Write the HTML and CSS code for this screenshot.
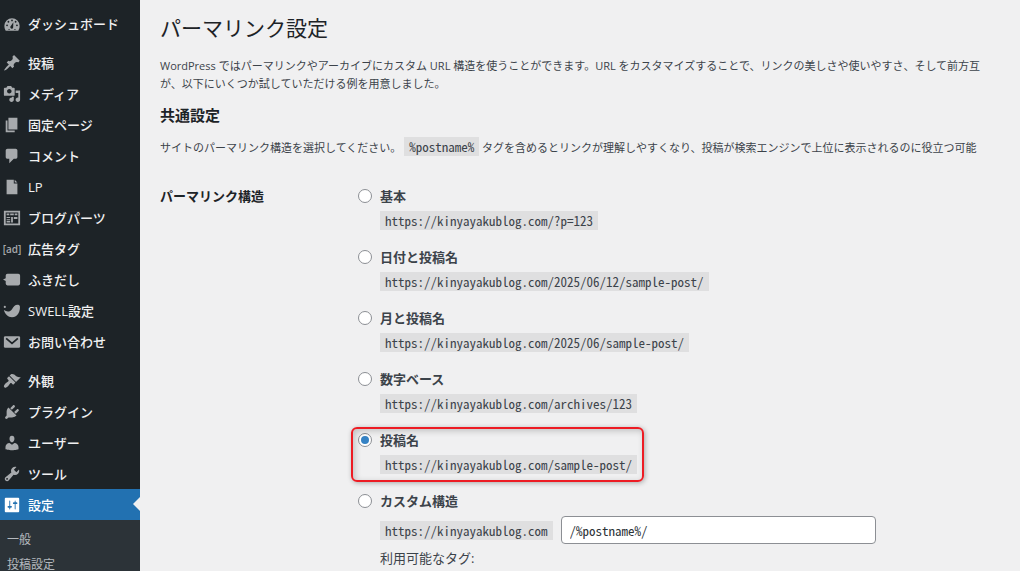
FILE: index.html
```html
<!DOCTYPE html>
<html lang="ja">
<head>
    <meta charset="UTF-8">
    <meta name="viewport" content="width=device-width, initial-scale=1.0">
    <title>パーマリンク設定</title>
    <link rel="stylesheet" href="styles.css">
</head>
<body>
    <nav class="sidebar">
        <ul class="menu">
            <li><a href="#"><svg class="icon" viewBox="0 0 20 20"><path d="M3 17.500h14A8.500 8.500 0 0 0 18.500 12a8.500 8.500 0 0 0-17 0c0 2 .6 4 1.500 5.500z"/><g class="cut"><circle cx="10" cy="6" r="1"/><circle cx="6" cy="7.500" r="1"/><circle cx="14" cy="7.500" r="1"/><circle cx="4.500" cy="11.500" r="1"/><circle cx="15.500" cy="11.500" r="1"/><path d="M11.500 8l-.2 5.500a1.600 1.600 0 1 1-2.600-1.200zM6 15.500h1.500v1H6zM12.500 15.500H14v1h-1.500z"/></g></svg>ダッシュボード</a></li>
            <li class="separated"><a href="#"><svg class="icon" viewBox="0 0 20 20"><path d="M10.440 3.020l1.820-1.820 6.360 6.350-1.830 1.820c-1.050-.68-2.480-.57-3.410.36l-.75.75c-.92.93-1.040 2.350-.35 3.410l-1.830 1.820-2.410-2.410-2.800 2.790c-.42.42-3.380 2.710-3.800 2.290s1.860-3.390 2.280-3.810l2.790-2.790L4.100 9.360l1.830-1.820c1.050.69 2.480.57 3.400-.36l.75-.75c.93-.92 1.050-2.350.36-3.410z"/></svg>投稿</a></li>
            <li><a href="#"><svg class="icon" viewBox="0 0 20 20"><path fill-rule="evenodd" d="M13 11V4c0-.55-.45-1-1-1h-1.670L9 1H5L3.670 3H2c-.55 0-1 .45-1 1v7c0 .55.45 1 1 1h10c.55 0 1-.45 1-1zM7 4.500c1.380 0 2.500 1.120 2.500 2.500S8.380 9.500 7 9.500 4.500 8.380 4.500 7 5.620 4.500 7 4.500zM14 6h5v10.500c0 1.380-1.120 2.500-2.500 2.500S14 17.880 14 16.500s1.120-2.500 2.500-2.500c.17 0 .34.02.5.05V9h-3V6zm-4 8.050V13h2v3.500c0 1.380-1.120 2.500-2.500 2.500S7 17.880 7 16.500 8.120 14 9.500 14c.17 0 .34.02.5.05z"/></svg>メディア</a></li>
            <li><a href="#"><svg class="icon" viewBox="0 0 20 20"><path d="M6 15V2h10v13H6zm-1 1h8v2H3V5h2v11z"/></svg>固定ページ</a></li>
            <li><a href="#"><svg class="icon" viewBox="0 0 20 20"><path d="M5 2h9c1.100 0 2 .9 2 2v7c0 1.100-.9 2-2 2h-2l-5 5v-5H5c-1.100 0-2-.9-2-2V4c0-1.100.9-2 2-2z"/></svg>コメント</a></li>
            <li><a href="#"><svg class="icon" viewBox="0 0 20 20"><path d="M4 2h8v4h4v12H4zM13 2l3 3h-3z"/></svg>LP</a></li>
            <li><a href="#"><svg class="icon" viewBox="0 0 20 20"><path fill-rule="evenodd" d="M1 2h18v16H1zM3 4v12h14V4z"/><path d="M4 5h3v2H4zM8 5h4v2H8zM13 5h3v2h-3zM4 9h4v1H4zM4 11h4v1H4zM4 13h4v2H4zM9 9h2v6H9zM12 9h4v2h-4z"/></svg>ブログパーツ</a></li>
            <li><a href="#"><span class="icon icon-text">[ad]</span>広告タグ</a></li>
            <li><a href="#"><svg class="icon" viewBox="0 0 20 20"><path d="M5 3h12a2 2 0 0 1 2 2v9a2 2 0 0 1-2 2H5a2 2 0 0 1-2-2v-3L0 9.500 3 8V5a2 2 0 0 1 2-2z"/></svg>ふきだし</a></li>
            <li><a href="#"><svg class="icon" viewBox="0 0 20 20"><path d="M1 9c3.500 2.500 7 2 9-1 1.500-3 3.500-5 6-5 1.300 0 2.300.6 2.700 1.500.8 5.500-2.200 12.500-8.700 12.500C5.500 17 2 13.500 1 9z"/><circle cx="2" cy="5.500" r="1.200"/></svg>SWELL設定</a></li>
            <li><a href="#"><svg class="icon" viewBox="0 0 20 20"><rect x="1" y="3.500" width="18" height="13" rx="1.500"/><path class="cut-line" d="M3.500 6l6.500 5.500L16.500 6"/></svg>お問い合わせ</a></li>
            <li class="separated"><a href="#"><svg class="icon" viewBox="0 0 20 20"><path d="M14.480 11.060L7.410 3.990l1.500-1.500c.5-.56 2.300-.47 3.510.32 1.210.8 1.430 1.280 2.910 2.100 1.180.64 2.450 1.260 4.450.85zm-.71.71L6.700 4.700 4.930 6.470c-.39.39-.39 1.020 0 1.410l1.060 1.060c.39.39.39 1.030 0 1.420-.6.6-1.430 1.110-2.210 1.690-.35.26-.7.53-1.010.84C1.430 14.230.4 16.080 1.400 17.070c.99 1 2.840-.03 4.180-1.360.31-.31.58-.66.85-1.020.57-.78 1.080-1.610 1.690-2.210.39-.39 1.020-.39 1.410 0l1.060 1.060c.39.39 1.020.39 1.410 0z"/></svg>外観</a></li>
            <li><a href="#"><svg class="icon" viewBox="0 0 20 20"><path d="M13.110 4.360L9.870 7.600 8 5.730l3.240-3.240c.35-.34 1.050-.2 1.560.32.52.51.66 1.210.31 1.550zm-8 1.770l.91-1.120 9.010 9.010-1.190.84c-.71.71-2.630 1.160-3.820 1.160H6.140L4.900 17.260c-.59.59-1.540.59-2.120 0-.59-.58-.59-1.530 0-2.120l1.240-1.240v-3.880c0-1.130.4-3.190 1.090-3.890zm7.260 3.970l3.240-3.240c.34-.35 1.040-.21 1.550.31.52.51.66 1.210.31 1.550l-3.240 3.250z"/></svg>プラグイン</a></li>
            <li><a href="#"><svg class="icon" viewBox="0 0 20 20"><path d="M10 9.250c-2.270 0-2.730-3.440-2.730-3.440C7 4.020 7.820 2 9.970 2c2.160 0 2.980 2.020 2.710 3.810 0 0-.41 3.440-2.680 3.440zm0 2.570L12.720 10c2.390 0 4.520 2.330 4.520 4.530v2.490s-3.650 1.130-7.240 1.130c-3.650 0-7.240-1.130-7.240-1.130v-2.490c0-2.250 1.940-4.480 4.470-4.480z"/></svg>ユーザー</a></li>
            <li><a href="#"><svg class="icon" viewBox="0 0 20 20"><path fill-rule="evenodd" d="M16.680 9.770c-1.340 1.340-3.300 1.670-4.950.99l-5.410 6.520c-.99.99-2.590.99-3.580 0s-.99-2.590 0-3.570l6.520-5.420c-.68-1.650-.35-3.610.99-4.950 1.280-1.280 3.120-1.620 4.720-1.060l-2.890 2.890 2.820 2.820 2.860-2.870c.53 1.580.18 3.390-1.080 4.650zM3.810 16.210c.4.39 1.040.39 1.430 0 .4-.4.4-1.040 0-1.430-.39-.4-1.030-.4-1.430 0-.39.39-.39 1.030 0 1.430z"/></svg>ツール</a></li>
            <li><a class="current" href="#"><svg class="icon" viewBox="0 0 20 20"><path fill-rule="evenodd" d="M18 17V3a1 1 0 0 0-1-1H3a1 1 0 0 0-1 1v14a1 1 0 0 0 1 1h14a1 1 0 0 0 1-1zM8 11h1c.55 0 1 .45 1 1s-.45 1-1 1H8v1.500c0 .28-.22.5-.5.5s-.5-.22-.5-.5V13H6c-.55 0-1-.45-1-1s.45-1 1-1h1V5.500c0-.28.22-.5.5-.5s.5.22.5.5V11zm5-2h-1c-.55 0-1-.45-1-1s.45-1 1-1h1V5.500c0-.28.22-.5.5-.5s.5.22.5.5V7h1c.55 0 1 .45 1 1s-.45 1-1 1h-1v5.500c0 .28-.22.5-.5.5s-.5-.22-.5-.5V9z"/></svg>設定</a></li>
        </ul>
        <ul class="submenu">
            <li><a href="#">一般</a></li>
            <li><a href="#">投稿設定</a></li>
        </ul>
    </nav>

    <main class="content">
        <h1>パーマリンク設定</h1>
        <p>WordPress ではパーマリンクやアーカイブにカスタム URL 構造を使うことができます。URL をカスタマイズすることで、リンクの美しさや使いやすさ、そして前方互<br>が、以下にいくつか試していただける例を用意しました。</p>
        <h2>共通設定</h2>
        <p class="hint">サイトのパーマリンク構造を選択してください。 <code>%postname%</code> タグを含めるとリンクが理解しやすくなり、投稿が検索エンジンで上位に表示されるのに役立つ可能</p>

        <form class="settings">
            <h3 id="structure-title">パーマリンク構造</h3>
            <div class="options" role="radiogroup" aria-labelledby="structure-title">
                <div class="option">
                    <input type="radio" name="structure" id="plain">
                    <label for="plain">基本</label>
                    <code>https://kinyayakublog.com/?p=123</code>
                </div>
                <div class="option">
                    <input type="radio" name="structure" id="day-name">
                    <label for="day-name">日付と投稿名</label>
                    <code>https://kinyayakublog.com/2025/06/12/sample-post/</code>
                </div>
                <div class="option">
                    <input type="radio" name="structure" id="month-name">
                    <label for="month-name">月と投稿名</label>
                    <code>https://kinyayakublog.com/2025/06/sample-post/</code>
                </div>
                <div class="option">
                    <input type="radio" name="structure" id="numeric">
                    <label for="numeric">数字ベース</label>
                    <code>https://kinyayakublog.com/archives/123</code>
                </div>
                <div class="option highlighted">
                    <input type="radio" name="structure" id="post-name" checked>
                    <label for="post-name">投稿名</label>
                    <code>https://kinyayakublog.com/sample-post/</code>
                </div>
                <div class="option">
                    <input type="radio" name="structure" id="custom">
                    <label for="custom">カスタム構造</label>
                    <div class="custom-row">
                        <code>https://kinyayakublog.com</code>
                        <input type="text" value="/%postname%/" aria-label="カスタム構造">
                    </div>
                    <p class="tags">利用可能なタグ:</p>
                </div>
            </div>
        </form>
    </main>
</body>
</html>
```
FILE: styles.css
```css
* {
    box-sizing: border-box;
}
body {
    display: flex;
    height: 100vh;
    margin: 0;
    overflow: hidden;
    background: #f0f0f1;
    color: #3c434a;
    font-family: "Open Sans", "Noto Sans CJK JP", sans-serif;
    font-size: 11px;
}
ul {
    margin: 0;
    padding: 0;
    list-style: none;
}
.sidebar {
    display: flex;
    flex: 0 0 140px;
    flex-direction: column;
    padding-top: 8px;
    background: #1d2327;
}
.menu a {
    display: flex;
    align-items: center;
    gap: 7px;
    height: 31px;
    padding-left: 3px;
    color: #f0f0f1;
    font-size: 13px;
    font-weight: 500;
    text-decoration: none;
}
.separated {
    margin-top: 8px;
}
.icon {
    flex: none;
    width: 18px;
    height: 18px;
    fill: #a7aaad;
}
.icon-text {
    display: flex;
    align-items: center;
    justify-content: center;
    color: #a7aaad;
    font-size: 10px;
    font-weight: 600;
}
.cut {
    fill: #1d2327;
}
.cut-line {
    fill: none;
    stroke: #1d2327;
    stroke-width: 2;
}
.menu .current {
    position: relative;
    background: #2271b1;
    color: #fff;
}
.current .icon {
    fill: #fff;
}
.current::after {
    content: "";
    position: absolute;
    top: 8px;
    right: 0;
    border: 7px solid transparent;
    border-right-color: #f0f0f1;
    border-left: 0;
}
.submenu {
    flex: 1;
    padding-top: 7px;
    background: #2c3338;
}
.submenu a {
    display: block;
    padding-left: 7px;
    color: #b4b9be;
    font-size: 12px;
    line-height: 25px;
    text-decoration: none;
}
.content {
    flex: 1;
    min-width: 0;
    padding: 14px 0 0 20px;
    overflow: hidden;
    white-space: nowrap;
}
h1 {
    margin: 0 0 15px;
    color: #1d2327;
    font-size: 21px;
    font-weight: 400;
    line-height: 28px;
}
p {
    margin: 0;
    line-height: 18px;
}
h2 {
    margin: 12px 0;
    color: #1d2327;
    font-size: 15px;
    line-height: 20px;
}
.hint {
    line-height: 22px;
}
code {
    display: inline-block;
    padding: 3px 5px;
    background: #dfdfe0;
    font-family: "Noto Sans Mono CJK JP", "DejaVu Sans Mono", monospace;
    font-size: 13px;
    line-height: 13px;
}
.settings {
    display: grid;
    grid-template-columns: 198px 1fr;
    margin-top: 27px;
}
h3 {
    margin: 0;
    color: #1d2327;
    font-size: 13px;
    line-height: 20px;
}
.options {
    display: flex;
    flex-direction: column;
    align-items: flex-start;
    gap: 17px;
}
.option {
    display: grid;
    grid-template-columns: 14px auto;
    gap: 5px 8px;
    align-items: center;
    justify-items: start;
    position: relative;
}
.option label {
    font-size: 13px;
    font-weight: 700;
    line-height: 20px;
}
.option > code,
.custom-row,
.tags {
    grid-column: 2;
}
input[type="radio"] {
    appearance: none;
    display: grid;
    place-items: center;
    width: 14px;
    height: 14px;
    margin: 0;
    border: 1px solid #8c8f94;
    border-radius: 50%;
    background: #fff;
}
input[type="radio"]:checked::before {
    content: "";
    width: 8px;
    height: 8px;
    border-radius: 50%;
    background: #3582c4;
}
/* red frame drawn around the selected choice */
.highlighted::after {
    content: "";
    position: absolute;
    inset: -3px -7px -8px -7px;
    border: 2px solid #ed1c24;
    border-radius: 6px;
    box-shadow: 1px 1px 5px rgba(0, 0, 0, 0.3), inset 2px 2px 6px rgba(0, 0, 0, 0.2);
    pointer-events: none;
}
.custom-row {
    display: flex;
    align-items: center;
    gap: 8px;
}
input[type="text"] {
    width: 315px;
    height: 28px;
    padding: 0 8px;
    border: 1px solid #8c8f94;
    border-radius: 4px;
    background: #fff;
    color: #2c3338;
    font-family: "Noto Sans Mono CJK JP", "DejaVu Sans Mono", monospace;
    font-size: 13px;
}
.tags {
    font-size: 13px;
}
```
